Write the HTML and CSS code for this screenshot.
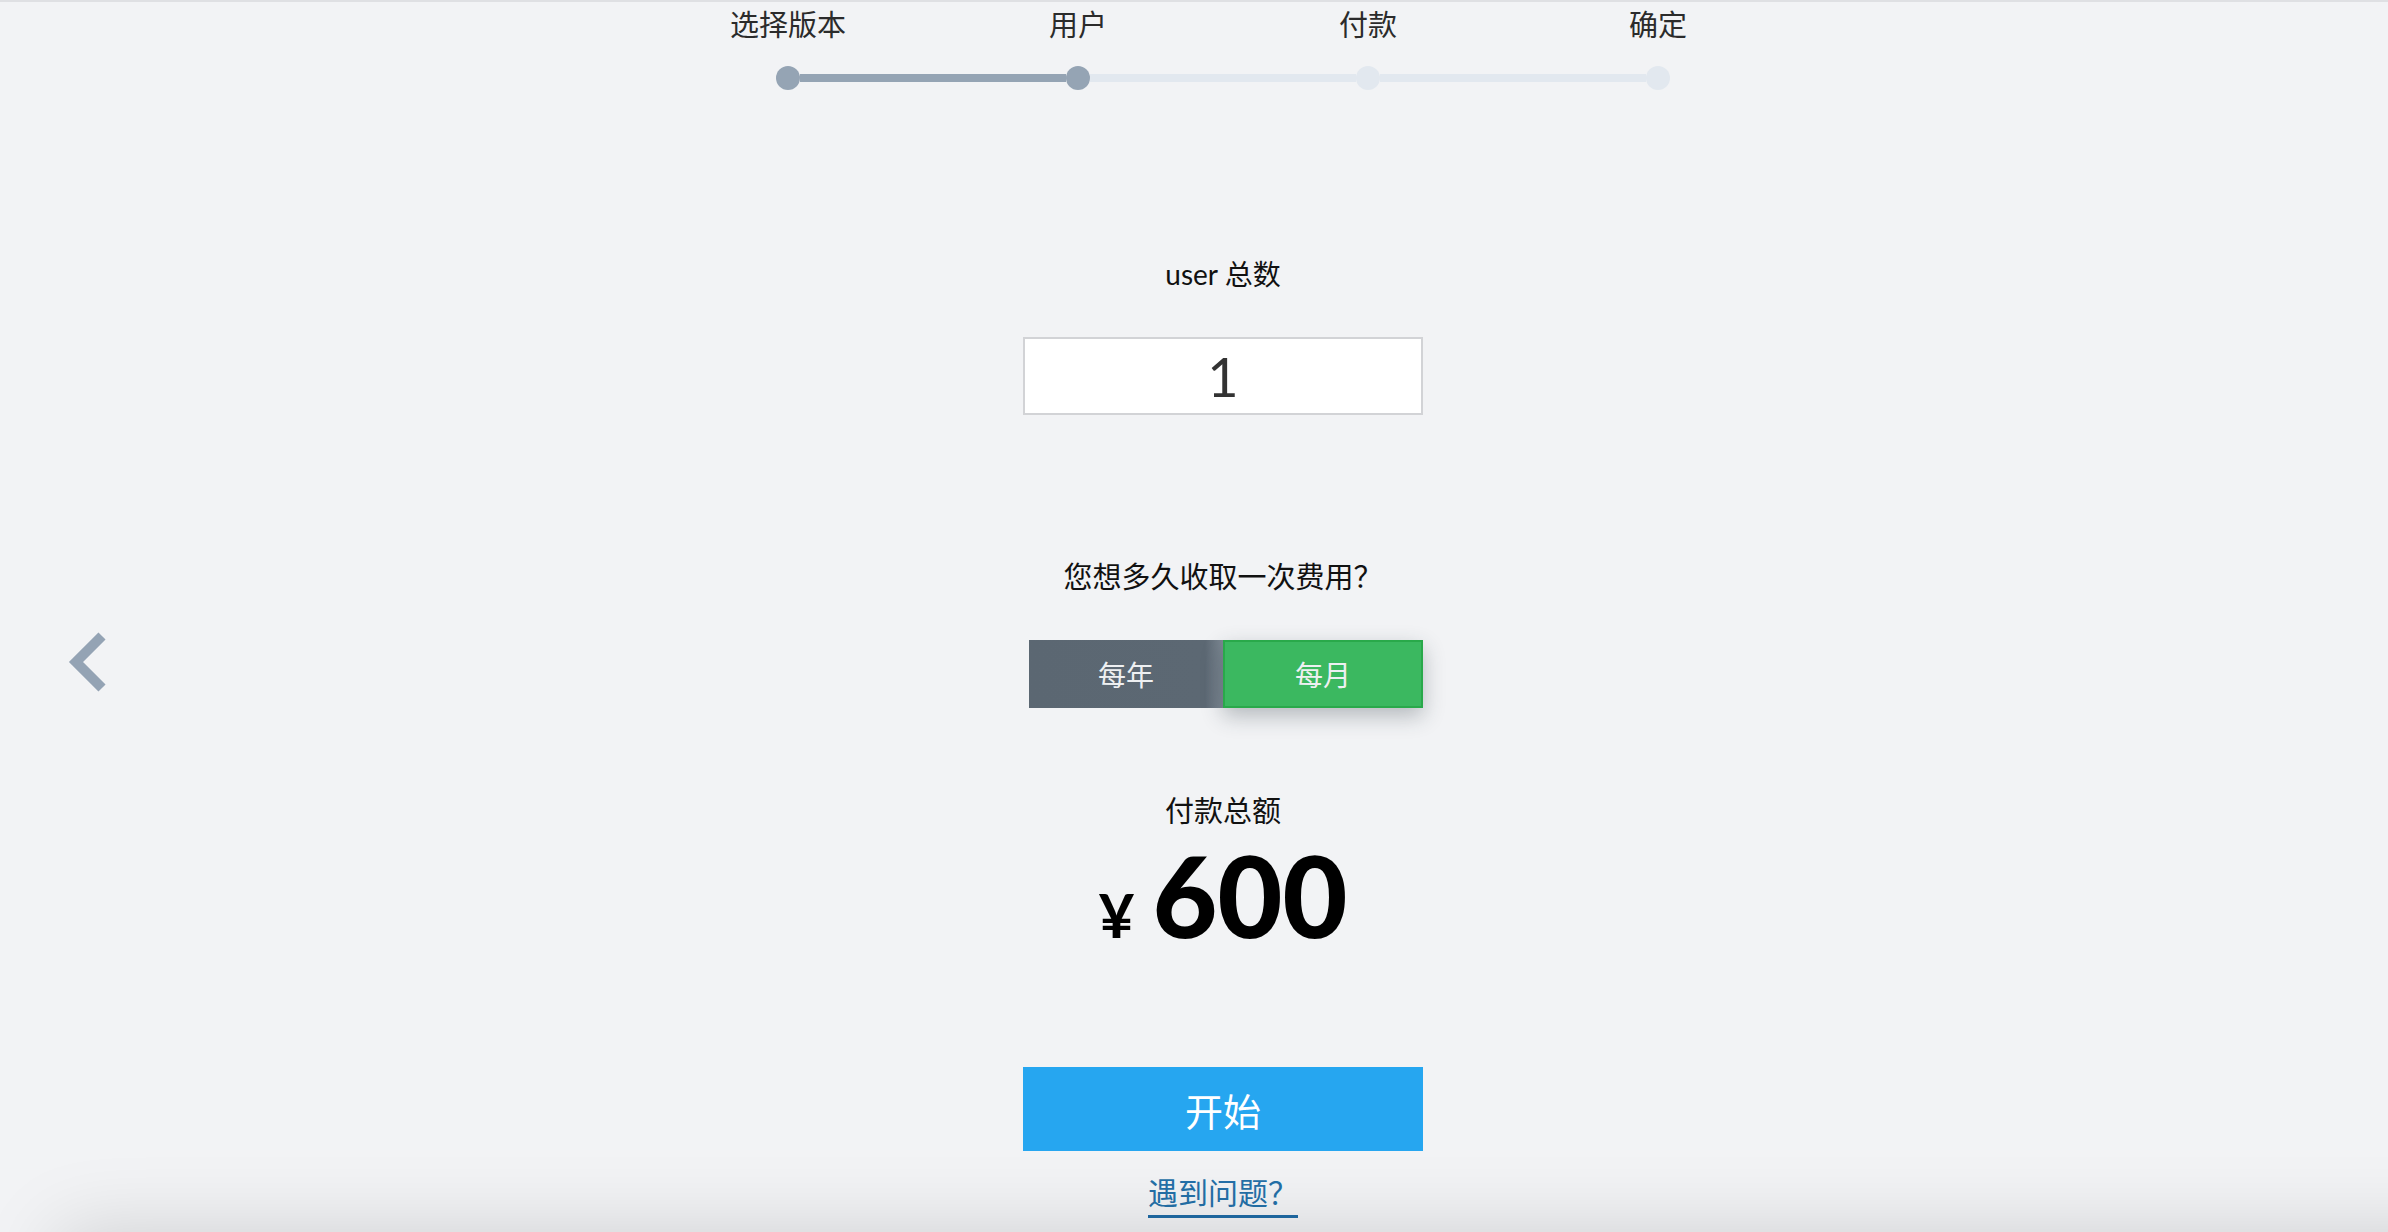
FILE: index.html
```html
<!DOCTYPE html>
<html>
<head>
	<title>选择用户数</title>
	<meta charset="utf-8"/>
	<link rel="stylesheet" href="styles.css">
</head>
<body>
	<div class="page">
		<a class="back" href="#">
			<svg width="48" height="68" viewBox="0 0 48 68">
				<polyline points="38,8 12,34 38,60" fill="none" stroke="#94a3b4" stroke-width="10" stroke-linejoin="miter"/>
			</svg>
		</a>

		<main class="wizard">
			<ol class="step-labels">
				<li>选择版本</li>
				<li>用户</li>
				<li>付款</li>
				<li>确定</li>
			</ol>
			<div class="step-track">
				<span class="dot done"></span>
				<span class="bar done"></span>
				<span class="dot done"></span>
				<span class="bar"></span>
				<span class="dot"></span>
				<span class="bar"></span>
				<span class="dot"></span>
			</div>

			<label class="field-title" for="users">user 总数</label>
			<input id="users" class="count" type="text" value="1">

			<p class="question">您想多久收取一次费用？</p>
			<div class="toggle">
				<button class="opt opt-year">每年</button>
				<button class="opt opt-month active">每月</button>
			</div>

			<p class="total-label">付款总额</p>
			<div class="amount"><span class="currency">¥</span>600</div>

			<button class="start">开始</button>
			<a class="help" href="#">遇到问题？</a>
		</main>

		<div class="shade"></div>
	</div>
</body>
</html>
```

FILE: styles.css
```css
html, body {
	margin: 0;
	padding: 0;
	height: 100%;
	overflow: hidden;
	background: #f2f3f5;
}

.page {
	position: relative;
	box-sizing: border-box;
	height: 100vh;
	padding-left: 58px;
	border-top: 2px solid #dfe0e3;
	font-family: "Liberation Serif", "Noto Sans CJK SC", serif;
	color: #111;
}

.back {
	position: absolute;
	left: 64px;
	top: 626px;
	display: block;
	line-height: 0;
}

.wizard {
	display: flex;
	flex-direction: column;
	align-items: center;
}

/* steps */
.step-labels {
	display: grid;
	grid-template-columns: repeat(4, 290px);
	margin: 4px 0 0;
	padding: 0;
	list-style: none;
	text-align: center;
	font-size: 29px;
	line-height: 40px;
	color: #2b2b2b;
}

.step-track {
	display: flex;
	align-items: center;
	margin-top: 20px;
}

.dot {
	width: 24px;
	height: 24px;
	border-radius: 50%;
	background: #e2e8ef;
}

.bar {
	width: 266px;
	height: 8px;
	background: #e2e8ef;
}

.dot.done, .bar.done {
	background: #95a4b4;
}

/* user count */
.field-title {
	margin-top: 164px;
	font-family: Lato, "Noto Sans CJK SC", sans-serif;
	font-size: 28px;
	line-height: 40px;
	color: #111;
}

.count {
	box-sizing: border-box;
	width: 400px;
	height: 78px;
	margin-top: 43px;
	border: 2px solid #d2d3d6;
	background: #fff;
	text-align: center;
	font-family: Lato, sans-serif;
	font-size: 54px;
	color: #333;
	outline: none;
}

/* billing */
.question {
	margin: 143px 0 0;
	font-size: 29px;
	line-height: 40px;
}

.toggle {
	display: flex;
	margin: 42px 0 0 6px;
}

.opt {
	box-sizing: border-box;
	height: 68px;
	margin: 0;
	padding: 0;
	border: none;
	font-family: "Liberation Serif", "Noto Sans CJK SC", serif;
	font-size: 28px;
	color: #eef0f2;
	cursor: pointer;
}

.opt-year {
	width: 194px;
	background: linear-gradient(to right, #5b6772 0, #5c6873 calc(100% - 18px), #7d8893 100%);
}

.opt-month {
	width: 200px;
	background: #3bb860;
	border: 2px solid #29a94a;
	box-shadow: 0 8px 20px rgba(40, 52, 64, .3);
}

/* total */
.total-label {
	margin: 84px 0 0;
	font-size: 29px;
	line-height: 40px;
}

.amount {
	margin-top: 7px;
	font-family: Lato, sans-serif;
	font-weight: 900;
	font-size: 112px;
	line-height: 1;
	color: #000;
}

.currency {
	font-size: 62px;
	font-weight: 700;
	margin-right: 18px;
}

/* actions */
.start {
	width: 400px;
	height: 84px;
	margin-top: 116px;
	border: none;
	background: #26a6f0;
	color: #fff;
	font-family: "Noto Sans CJK SC", sans-serif;
	font-size: 38px;
	cursor: pointer;
}

.help {
	margin-top: 25px;
	padding-bottom: 3px;
	font-size: 30px;
	line-height: 36px;
	color: #2470a8;
	text-decoration: none;
	border-bottom: 3px solid #1f6ba5;
}

.shade {
	position: fixed;
	left: 58px;
	right: -100px;
	top: 100%;
	height: 200px;
	box-shadow: 0 0 80px rgba(0, 0, 0, .15);
}
```
